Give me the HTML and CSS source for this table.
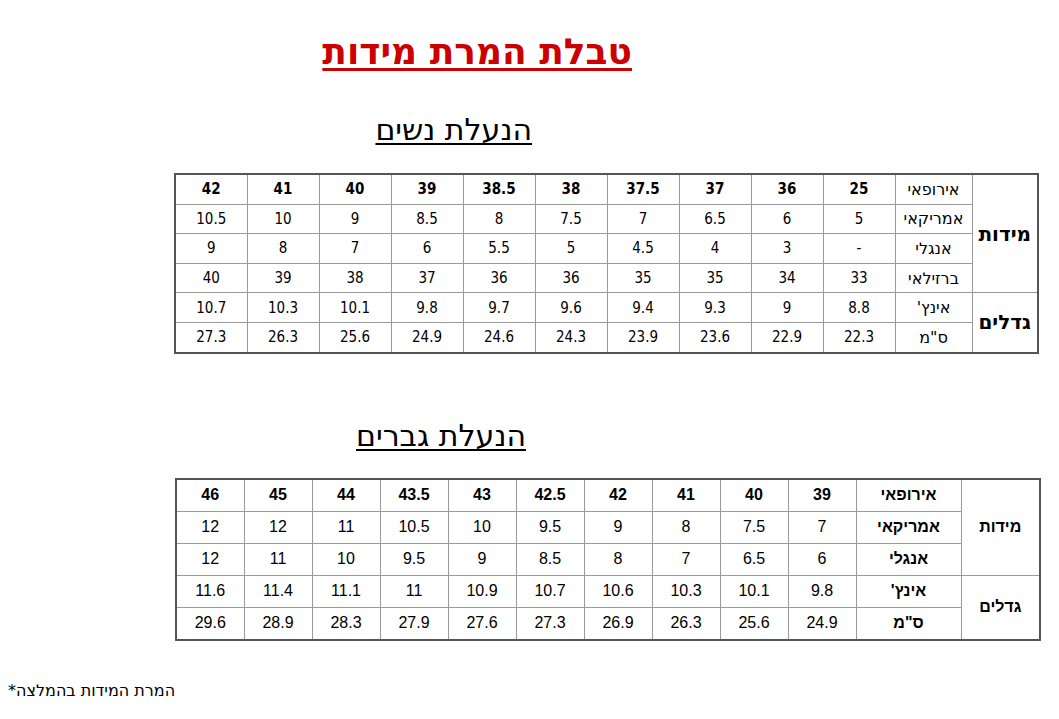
FILE: index.html
```html
<!DOCTYPE html>
<html lang="he" dir="rtl">
<head>
<meta charset="utf-8">
<title>טבלת המרת מידות</title>
<link rel="stylesheet" href="styles.css">
</head>
<body>
<h1 class="title">טבלת המרת מידות</h1>

<h2 class="sub sub-women">הנעלת נשים</h2>
<table class="sizes women">
  <colgroup>
    <col class="c-group1"><col class="c-label1">
    <col span="10" class="c-data1">
  </colgroup>
  <tr class="head">
    <th class="group" rowspan="4">מידות</th>
    <td class="label">אירופאי</td>
    <td>25</td><td>36</td><td>37</td><td>37.5</td><td>38</td><td>38.5</td><td>39</td><td>40</td><td>41</td><td>42</td>
  </tr>
  <tr>
    <td class="label">אמריקאי</td>
    <td>5</td><td>6</td><td>6.5</td><td>7</td><td>7.5</td><td>8</td><td>8.5</td><td>9</td><td>10</td><td>10.5</td>
  </tr>
  <tr>
    <td class="label">אנגלי</td>
    <td>-</td><td>3</td><td>4</td><td>4.5</td><td>5</td><td>5.5</td><td>6</td><td>7</td><td>8</td><td>9</td>
  </tr>
  <tr>
    <td class="label">ברזילאי</td>
    <td>33</td><td>34</td><td>35</td><td>35</td><td>36</td><td>36</td><td>37</td><td>38</td><td>39</td><td>40</td>
  </tr>
  <tr>
    <th class="group" rowspan="2">גדלים</th>
    <td class="label">אינץ'</td>
    <td>8.8</td><td>9</td><td>9.3</td><td>9.4</td><td>9.6</td><td>9.7</td><td>9.8</td><td>10.1</td><td>10.3</td><td>10.7</td>
  </tr>
  <tr>
    <td class="label">ס"מ</td>
    <td>22.3</td><td>22.9</td><td>23.6</td><td>23.9</td><td>24.3</td><td>24.6</td><td>24.9</td><td>25.6</td><td>26.3</td><td>27.3</td>
  </tr>
</table>

<h2 class="sub sub-men">הנעלת גברים</h2>
<table class="sizes men">
  <colgroup>
    <col class="c-group2"><col class="c-label2">
    <col span="10" class="c-data2">
  </colgroup>
  <tr class="head">
    <th class="group" rowspan="3">מידות</th>
    <td class="label">אירופאי</td>
    <td>39</td><td>40</td><td>41</td><td>42</td><td>42.5</td><td>43</td><td>43.5</td><td>44</td><td>45</td><td>46</td>
  </tr>
  <tr>
    <td class="label">אמריקאי</td>
    <td>7</td><td>7.5</td><td>8</td><td>9</td><td>9.5</td><td>10</td><td>10.5</td><td>11</td><td>12</td><td>12</td>
  </tr>
  <tr>
    <td class="label">אנגלי</td>
    <td>6</td><td>6.5</td><td>7</td><td>8</td><td>8.5</td><td>9</td><td>9.5</td><td>10</td><td>11</td><td>12</td>
  </tr>
  <tr>
    <th class="group" rowspan="2">גדלים</th>
    <td class="label">אינץ'</td>
    <td>9.8</td><td>10.1</td><td>10.3</td><td>10.6</td><td>10.7</td><td>10.9</td><td>11</td><td>11.1</td><td>11.4</td><td>11.6</td>
  </tr>
  <tr>
    <td class="label">ס"מ</td>
    <td>24.9</td><td>25.6</td><td>26.3</td><td>26.9</td><td>27.3</td><td>27.6</td><td>27.9</td><td>28.3</td><td>28.9</td><td>29.6</td>
  </tr>
</table>

<p class="note">המרת המידות בהמלצה*</p>
</body>
</html>
```

FILE: styles.css
```css
html, body {
  margin: 0;
  padding: 0;
  background: #ffffff;
  color: #000000;
}
body {
  direction: rtl;
  font-family: "DejaVu Sans", sans-serif;
  padding-top: 30px;
}
.title {
  margin: 0 427px 0 0;
  text-align: right;
  font-family: "DejaVu Sans", sans-serif;
  font-weight: bold;
  font-size: 36px;
  line-height: 44px;
  color: #cc0000;
  text-decoration: underline;
  text-decoration-thickness: 3px;
  text-underline-offset: 4px;
}
.sub {
  margin: 0;
  text-align: right;
  font-family: "DejaVu Sans", sans-serif;
  font-weight: normal;
  font-size: 30px;
  line-height: 36px;
  text-decoration: underline;
  text-decoration-thickness: 2px;
  text-underline-offset: 3px;
}
.sub-women {
  margin: 38px 527px 0 0;
}
.sub-men {
  margin: 64px 533px 0 0;
}
.sizes {
  border-collapse: collapse;
  table-layout: fixed;
  border: 2px solid #555555;
}
.sizes td, .sizes th {
  border: 1px solid #999999;
  text-align: center;
  padding: 0;
  color: #000000;
}
.women {
  margin: 25px 20px 0 0;
  width: 864px;
  font-family: "DejaVu Sans Condensed", "DejaVu Sans", sans-serif;
  font-size: 15px;
}
.women td, .women th {
  height: 28.6px;
}
.c-group1 { width: 66px; }
.c-label1 { width: 77px; }
.c-data1 { width: 72px; }
.men {
  margin: 24px 18px 0 0;
  width: 866px;
  font-family: "Liberation Sans", Arial, sans-serif;
  font-size: 16px;
}
.men td, .men th {
  height: 31px;
}
.c-group2 { width: 79px; }
.c-label2 { width: 105px; }
.c-data2 { width: 68px; }
.head td { font-weight: bold; }
.group { font-weight: bold; }
.women .group { font-family: "DejaVu Sans", sans-serif; font-size: 20px; }
.men .label { font-weight: bold; }
.women .label { font-family: "DejaVu Sans", sans-serif; font-size: 16px; font-weight: normal; }
.note {
  margin: 40px 0 0 0;
  text-align: left;
  font-family: "DejaVu Sans", sans-serif;
  font-size: 16px;
  line-height: 20px;
  padding-left: 8px;
}
```
